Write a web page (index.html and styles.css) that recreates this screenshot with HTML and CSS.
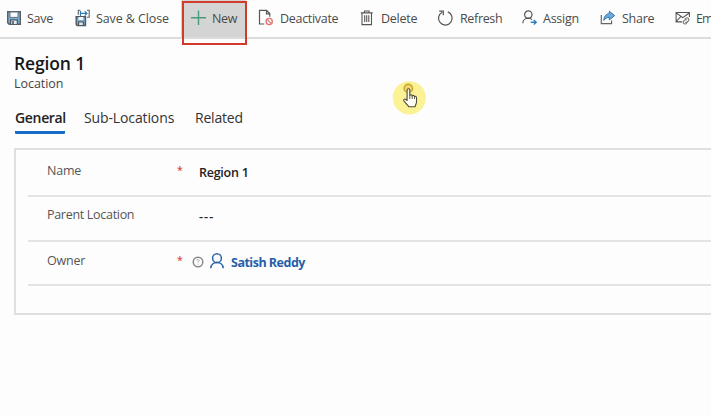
FILE: index.html
```
<!DOCTYPE html>
<html lang="en">
<head>
<meta charset="utf-8">
<title>Region 1</title>
<link rel="stylesheet" href="styles.css">
</head>
<body>
<nav class="commands">
  <button class="cmd save"><svg width="16" height="16" viewBox="0 0 16 16"><path d="M1.7 1.7h12.6v12.6H3.2L1.7 12.8z" fill="#79aed3" stroke="#53616d" stroke-width="1.4"/><path d="M4 2h8v5.4H4z" fill="#fafcfd" stroke="#68747e"/><path d="M4.6 14v-4.2h6.8V14" fill="#e3e8eb" stroke="#4d5963" stroke-width="1.3"/><path d="M7 11v3" stroke="#4d5963" stroke-width="1.6"/></svg><span>Save</span></button>
  <button class="cmd save-close"><svg width="16" height="18" viewBox="0 0 16 18"><path d="M1.2 7.7h9.3v8.8H2.2l-1-1z" fill="#79a9ca" stroke="#4f5962" stroke-width="1.4"/><path d="M3.5 8h4.8v3H3.5z" fill="#f5f8fa"/><path d="M3.6 16v-3h4.8v3" fill="#e3e7ea" stroke="#4f5962" stroke-width="1.2"/><path d="M3.3 5.7V1.3h2M12 1.3h2.2v7H12" fill="none" stroke="#58636c" stroke-width="1.1"/><path d="M5.5 2v5M6 4.4h6M9.7 2.1 12 4.4 9.7 6.7" fill="none" stroke="#327caf" stroke-width="1.2"/></svg><span>Save &amp; Close</span></button>
  <button class="cmd new"><svg width="16" height="16" viewBox="0 0 16 16"><path d="M7.5 .5v14.5M0 7.7h15" stroke="#4b9b7b" stroke-width="1.4"/></svg><span>New</span></button>
  <button class="cmd deactivate"><svg width="16" height="17" viewBox="0 0 16 17"><path d="M6.3 15H1.5V1.3h7l3.3 3.3v3.2M8.5 1.5v3.3h3.3" fill="none" stroke="#565656" stroke-width="1.2"/><circle cx="11.2" cy="12.5" r="3.1" fill="#fdfdfd" stroke="#df7470" stroke-width="1.3"/><path d="m9.1 10.4 4.2 4.2" stroke="#df7470" stroke-width="1.3"/></svg><span>Deactivate</span></button>
  <button class="cmd delete"><svg width="14" height="16" viewBox="0 0 14 16"><path d="M.8 2.9h11.9M4.4 2.7V1h4.7v1.7M2 3v11.6h9.5V3M4.7 5.3v6.8M6.7 5.3v6.8M8.8 5.3v6.8" fill="none" stroke="#555" stroke-width="1.1"/></svg><span>Delete</span></button>
  <button class="cmd refresh"><svg width="17" height="18" viewBox="0 0 17 18"><path d="M5.2 3.2a6.8 6.8 0 1 0 5.6-.3M2.2 2.1h4.1v4.1" fill="none" stroke="#555" stroke-width="1.2"/></svg><span>Refresh</span></button>
  <button class="cmd assign"><svg width="16" height="16" viewBox="0 0 16 16"><circle cx="6.3" cy="4.6" r="3.7" fill="none" stroke="#555" stroke-width="1.2"/><path d="M.8 13.2c.1-3 2.5-5 5.4-5 1.5 0 2.8.5 3.8 1.5" fill="none" stroke="#555" stroke-width="1.2"/><path d="M8.7 12.2h5.2M11.8 9.9l2.4 2.3-2.4 2.3" fill="none" stroke="#327fba" stroke-width="1.4"/></svg><span>Assign</span></button>
  <button class="cmd share"><svg width="16" height="16" viewBox="0 0 16 16"><path d="M1.3 5v8.6h10.3v-3" fill="none" stroke="#666" stroke-width="1.2"/><path d="M3.8 10.4c.2-4 2.1-6.5 5.5-6.7V1.2l5.4 4.4-5.4 4.3V7.4c-2.3 0-4.2.8-5.5 3z" fill="#68ace0" stroke="#3474aa"/></svg><span>Share</span></button>
  <button class="cmd email"><svg width="16" height="16" viewBox="0 0 16 16"><path d="M7.2 11.9H1.1V2.5h13.3V7M1.3 3l6.5 4.6L14.2 3M1.3 11.5l4.4-4.8" fill="none" stroke="#555" stroke-width="1.1"/><path d="m9.8 9.3 1-.9a1.8 1.8 0 0 1 2.5 2.6l-1.1 1a1.8 1.8 0 0 1-2.2.1M12.5 12.2l-1 1A1.8 1.8 0 1 1 9 10.7l.8-.6a1.8 1.8 0 0 1 2.2.1" fill="none" stroke="#777" stroke-width="1.1"/></svg><span>Em</span></button>
</nav>
<main>
  <header>
    <h1>Region 1</h1>
    <p class="entity">Location</p>
  </header>
  <div class="tabs">
    <a class="tab active">General</a>
    <a class="tab sub">Sub-Locations</a>
    <a class="tab related">Related</a>
  </div>
  <section class="card">
    <div class="row first">
      <span class="label">Name</span><span class="required">*</span><span class="value region">Region 1</span>
    </div>
    <div class="row second">
      <span class="label parent">Parent Location</span><span class="required"></span><span class="value empty">---</span>
    </div>
    <div class="row third">
      <span class="label">Owner</span><span class="required">*</span>
      <span class="value lookup"><svg width="12" height="12" viewBox="0 0 12 12"><circle cx="6" cy="6" r="4.8" fill="none" stroke="#888" stroke-width="1.4"/><path d="M4.8 4.7c0-1.6 2.6-1.4 2.4 0C7.1 5.6 6 5.6 6 6.7M6 7.7v.9" fill="none" stroke="#999" stroke-width=".8"/></svg><svg class="person" width="14" height="16" viewBox="0 0 14 16"><circle cx="7" cy="5.2" r="4.4" fill="none" stroke="#2962a5" stroke-width="1.5"/><path d="M.8 15.2c.2-3.3 2.7-5.6 6.2-5.6s6 2.3 6.2 5.6" fill="none" stroke="#2962a5" stroke-width="1.5"/></svg><a>Satish Reddy</a></span>
    </div>
  </section>
</main>
<div class="highlight"></div>
<svg class="pointer" width="36" height="36" viewBox="0 0 36 36"><circle cx="17.3" cy="17.8" r="16.6" fill="#faf295"/><circle cx="16.3" cy="8.4" r="4.2" fill="#eed66a" stroke="#c5a52f" stroke-width="1.4"/><path d="M15.1 20.5V10.2c0-2 2.7-2 2.7 0v5.2c.5-1.1 2.3-.8 2.4.5.7-.9 2.2-.5 2.3.7.9-.7 2-.1 2 1v4.2c0 2.2-1.2 3.1-1.5 5h-6.2c-.9-2-3-3.5-4.6-5.4-1.4-1.8.4-3.1 1.8-1.9z" fill="#fffef5" stroke="#4f4c3c" stroke-width="1.1" stroke-linejoin="round"/><path d="M17.8 15.5V19M20.2 16v3M22.5 16.7V19" stroke="#4f4c3c" stroke-width=".9"/></svg>
</body>
</html>
```
FILE: styles.css
```
* { box-sizing: border-box; }
body {
  position: relative;
  width: 711px;
  height: 417px;
  margin: 0;
  overflow: hidden;
  background: #fdfdfd;
  color: #4b4b4b;
  font: 12.5px/18px "Open Sans", "Noto Sans", sans-serif;
}
svg { display: block; flex: none; }
.commands {
  display: flex;
  height: 39px;
  overflow: hidden;
  border-bottom: 2px solid #dcdcdc;
}
.cmd {
  display: flex;
  flex: none;
  align-items: center;
  gap: 6px;
  height: 38px;
  padding: 0 0 3px;
  border: 0;
  background: none;
  color: inherit;
  font: inherit;
  letter-spacing: -.25px;
  white-space: nowrap;
}
.cmd span { position: relative; top: 1px; }
.save { width: 69px; padding-left: 6px; gap: 5px; }
.save-close { width: 112px; padding-left: 6px; gap: 5px; letter-spacing: -.1px; }
.new { width: 65px; padding-left: 10px; gap: 5px; background: #d4d4d4; letter-spacing: -.4px; }
.deactivate { width: 109px; padding-left: 12px; letter-spacing: -.3px; }
.delete { width: 77px; padding-left: 5px; gap: 7px; }
.refresh { width: 85px; padding-left: 5px; letter-spacing: -.35px; }
.assign { width: 78px; padding-left: 5px; gap: 5px; }
.share { width: 73px; padding-left: 5px; }
.email { width: 43px; padding-left: 7px; gap: 5px; letter-spacing: -1px; }
main { padding: 12px 0 0 14px; }
h1 {
  margin: 0;
  color: #171717;
  font-size: 17.5px;
  font-weight: 600;
  line-height: 24px;
  letter-spacing: -.15px;
}
.entity { margin: 0; line-height: 17px; color: #454545; letter-spacing: -.05px; }
.tabs {
  display: flex;
  gap: 19px;
  height: 29px;
  margin: 13px 0 0 1px;
  color: #333;
  font-size: 14px;
  line-height: 26px;
}
.tab { height: 29px; }
.active { width: 50px; border-bottom: 3px solid #176bc9; border-radius: 1px; color: #222; font-weight: 600; letter-spacing: -.33px; }
.sub { width: 92px; letter-spacing: -.12px; }
.related { letter-spacing: -.2px; }
.card {
  height: 167px;
  margin-top: 14px;
  padding-left: 12px;
  border: 2px solid #dfdfdf;
  border-right: 0;
}
.row {
  display: grid;
  grid-template-columns: 131px 21px 1fr;
  padding-left: 18px;
  border-bottom: 2px solid #e4e4e4;
}
.first { height: 47px; padding-top: 12px; }
.second { height: 45px; padding-top: 9px; }
.third { height: 44px; padding-top: 10px; }
.label { padding-left: 1px; letter-spacing: -.2px; color: #555; }
.parent { letter-spacing: -.3px; }
.required { color: #dc4b3e; font-size: 10.5px; font-weight: 600; line-height: 16px; }
.value { padding: 2px 0 0 1px; color: #222; }
.region { font-weight: 600; letter-spacing: -.25px; }
.empty { font-weight: 600; letter-spacing: 1.1px; }
.lookup { display: flex; align-items: center; height: 20px; margin-left: -7px; gap: 6px; }
.lookup svg { position: relative; top: -1px; }
.lookup .person { top: -2px; }
.lookup a { padding-left: 1px; color: #2460a8; font-weight: 700; letter-spacing: -.5px; }
.highlight {
  position: absolute;
  left: 182px;
  top: 1px;
  width: 65px;
  height: 44px;
  border: 2px solid #d13b2c;
}
.pointer { position: absolute; left: 392px; top: 80px; }
```
